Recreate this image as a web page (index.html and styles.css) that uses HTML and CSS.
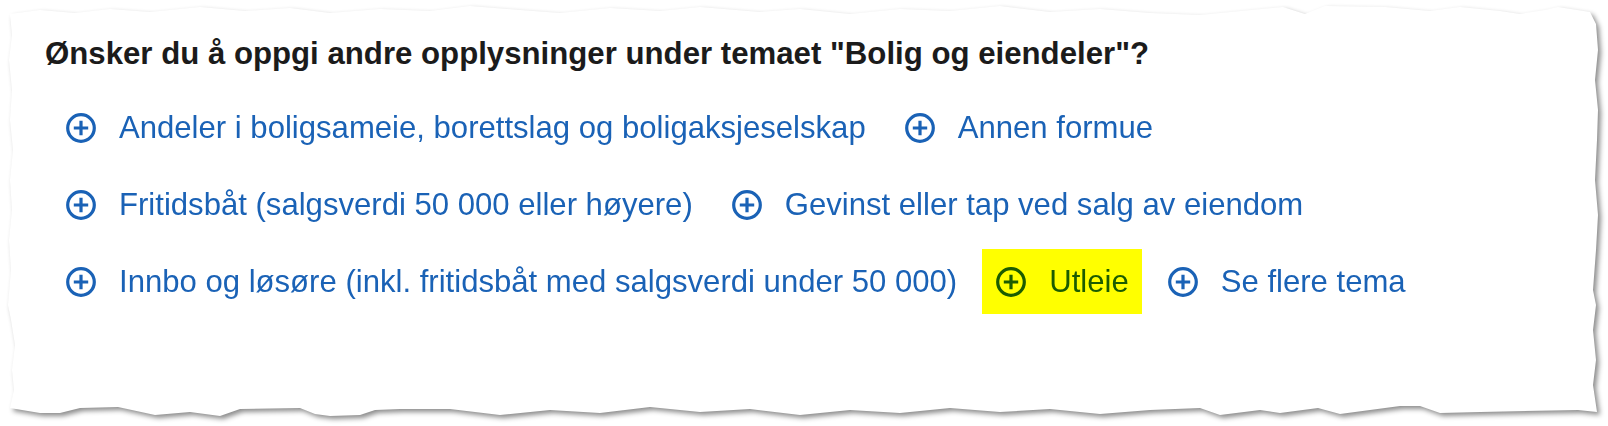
FILE: index.html
```html
<!DOCTYPE html>
<html lang="no">
<head>
<meta charset="utf-8">
<title>Bolig og eiendeler</title>
<link rel="stylesheet" href="styles.css">
</head>
<body>
<div class="paper-shadow">
  <section class="paper">
    <h2 class="question">Ønsker du å oppgi andre opplysninger under temaet "Bolig og eiendeler"?</h2>
    <ul class="topics">
      <li class="topic"><svg class="plus" viewBox="0 0 30 30"><circle cx="15" cy="15" r="13.3"/><path d="M15 7.8V22.2M7.8 15H22.2"/></svg><span>Andeler i boligsameie, borettslag og boligaksjeselskap</span></li>
      <li class="topic"><svg class="plus" viewBox="0 0 30 30"><circle cx="15" cy="15" r="13.3"/><path d="M15 7.8V22.2M7.8 15H22.2"/></svg><span>Annen formue</span></li>
      <li class="topic"><svg class="plus" viewBox="0 0 30 30"><circle cx="15" cy="15" r="13.3"/><path d="M15 7.8V22.2M7.8 15H22.2"/></svg><span>Fritidsbåt (salgsverdi 50 000 eller høyere)</span></li>
      <li class="topic"><svg class="plus" viewBox="0 0 30 30"><circle cx="15" cy="15" r="13.3"/><path d="M15 7.8V22.2M7.8 15H22.2"/></svg><span>Gevinst eller tap ved salg av eiendom</span></li>
      <li class="topic"><svg class="plus" viewBox="0 0 30 30"><circle cx="15" cy="15" r="13.3"/><path d="M15 7.8V22.2M7.8 15H22.2"/></svg><span>Innbo og løsøre (inkl. fritidsbåt med salgsverdi under 50 000)</span></li>
      <li class="topic topic-marked"><svg class="plus" viewBox="0 0 30 30"><circle cx="15" cy="15" r="13.3"/><path d="M15 7.8V22.2M7.8 15H22.2"/></svg><span>Utleie</span></li>
      <li class="topic"><svg class="plus" viewBox="0 0 30 30"><circle cx="15" cy="15" r="13.3"/><path d="M15 7.8V22.2M7.8 15H22.2"/></svg><span>Se flere tema</span></li>
    </ul>
  </section>
</div>
</body>
</html>
```

FILE: styles.css
```css
html, body {
  margin: 0;
  padding: 0;
  background: #ffffff;
}

body {
  width: 1608px;
  height: 426px;
  overflow: hidden;
  font-family: "Liberation Sans", Arial, sans-serif;
}

.paper-shadow {
  width: 1608px;
  height: 426px;
  filter: drop-shadow(3px 3px 2.5px rgba(0, 0, 0, 0.45));
}

.paper {
  box-sizing: border-box;
  width: 1608px;
  height: 426px;
  background: #ffffff;
  padding: 36px 40px 0 45px;
  clip-path: polygon(
    10px 14px, 40px 10px, 75px 13px, 110px 9px, 150px 12px, 200px 7px, 245px 11px, 290px 8px,
    330px 13px, 380px 9px, 430px 11px, 470px 6px, 520px 10px, 560px 13px, 610px 8px, 660px 11px,
    700px 7px, 760px 12px, 800px 9px, 850px 14px, 900px 9px, 950px 11px, 1000px 6px, 1050px 12px,
    1100px 9px, 1150px 13px, 1200px 15px, 1283px 7px, 1305px 14px, 1325px 6px, 1385px 7px,
    1430px 11px, 1460px 7px, 1500px 11px, 1520px 14px, 1545px 10px, 1558px 7px, 1590px 12px,
    1596px 24px, 1598px 50px, 1595px 80px, 1598px 110px, 1597px 140px, 1595px 180px,
    1598px 215px, 1596px 250px, 1593px 290px, 1596px 305px, 1593px 330px, 1596px 360px,
    1593px 385px, 1597px 412px,
    1578px 410px, 1480px 412px, 1440px 413px, 1420px 406px, 1400px 406px, 1340px 414px,
    1318px 408px, 1280px 413px, 1260px 410px, 1220px 415px, 1200px 408px, 1150px 410px,
    1100px 414px, 1050px 409px, 1000px 412px, 950px 408px, 900px 413px, 850px 410px,
    800px 415px, 750px 409px, 700px 412px, 650px 407px, 600px 413px, 550px 410px, 500px 415px,
    450px 409px, 400px 409px, 375px 410px, 360px 415px, 330px 416px, 315px 414px, 300px 408px,
    240px 409px, 220px 416px, 190px 412px, 155px 415px, 118px 407px, 80px 408px, 60px 413px,
    40px 413px, 10px 408px,
    14px 390px, 12px 370px, 15px 345px, 11px 320px, 8px 305px, 11px 270px, 9px 240px,
    12px 210px, 10px 180px, 13px 150px, 10px 120px, 12px 90px, 9px 60px, 12px 35px
  );
}

.question {
  margin: 0 0 23px 0;
  font-size: 31.2px;
  line-height: 36px;
  font-weight: 700;
  color: #1b1b1b;
}

.topics {
  list-style: none;
  margin: 0 0 0 7px;
  padding: 0;
  display: flex;
  flex-wrap: wrap;
  column-gap: 12px;
  row-gap: 12px;
}

.topic {
  display: flex;
  align-items: center;
  height: 65px;
  padding: 0 13px 0 14px;
  box-sizing: border-box;
  font-size: 31.1px;
  line-height: 37px;
  color: #1a62b6;
  white-space: nowrap;
}

.plus {
  width: 30px;
  height: 30px;
  flex: none;
  margin-right: 23px;
  fill: none;
  stroke: currentColor;
  stroke-width: 3.2;
}

.topic-marked {
  background: #ffff00;
  color: #1b5c00;
}
```
